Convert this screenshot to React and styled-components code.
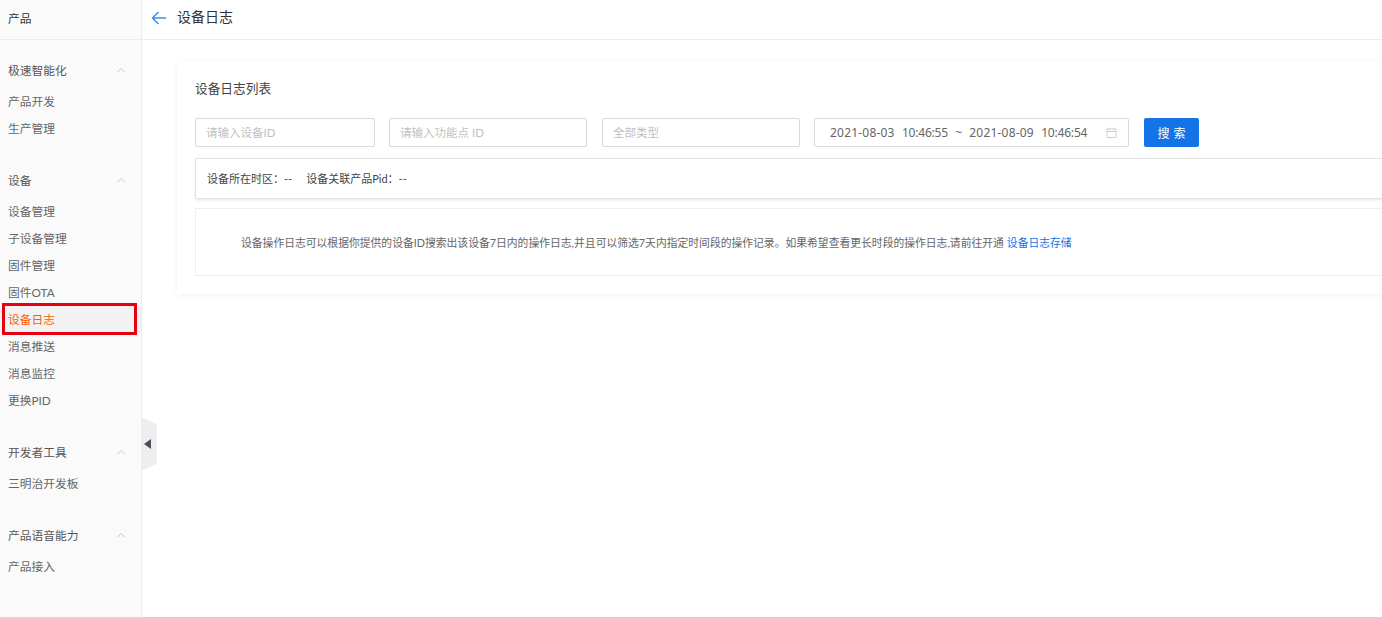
import React from 'react';
import styled, { createGlobalStyle } from 'styled-components';

const GlobalStyle = createGlobalStyle`
  html, body {
    margin: 0;
    padding: 0;
    height: 100%;
    background: #fff;
    overflow: hidden;
  }
  body {
    font-family: Lato, "Noto Sans CJK SC", sans-serif;
    font-size: 11.75px;
  }
  * { box-sizing: border-box; }
`;

const Page = styled.div`
  display: flex;
  width: 1382px;
  height: 617px;
  overflow: hidden;
`;

const Sidebar = styled.aside`
  position: relative;
  flex: 0 0 142px;
  background: #fafafa;
  border-right: 1px solid #ececec;
`;

const SideHead = styled.div`
  height: 40px;
  padding-left: 8px;
  line-height: 37px;
  color: #333;
  border-bottom: 1px solid #ececec;
`;

const Nav = styled.nav`
  display: flex;
  flex-direction: column;
  gap: 24px;
  padding-top: 16px;
`;

const Group = styled.div`
  display: flex;
  flex-direction: column;
`;

const GroupTitle = styled.div`
  display: flex;
  align-items: center;
  justify-content: space-between;
  height: 27px;
  padding: 0 15px 0 8px;
  margin-bottom: 5px;
  color: #555;
`;

const Item = styled.div`
  position: relative;
  height: 27px;
  line-height: 27px;
  padding-left: 8px;
  color: ${({ $active }) => ($active ? '#ff5c00' : '#666')};
  ${({ $active }) => $active && `
    background: #f2f2f2;
    &::after {
      content: '';
      box-sizing: border-box;
      position: absolute;
      left: 2px;
      top: -3px;
      width: 135px;
      height: 32px;
      border: 3px solid #e60012;
    }
  `}
`;

const Chevron = () => (
  <svg width="10" height="6" viewBox="0 0 10 6" fill="none" stroke="#c4c4c4" strokeWidth="1">
    <path d="M1.5 5L5 1.5 8.5 5" />
  </svg>
);

const Collapse = styled.div`
  position: absolute;
  left: 141px;
  top: 417px;
  width: 16px;
  height: 54px;
  padding-right: 3px;
  background: #eeeef0;
  clip-path: polygon(0 0, 100% 14%, 100% 86%, 0 100%);
  display: flex;
  align-items: center;
  justify-content: center;
  z-index: 2;
`;

const Main = styled.main`
  flex: 1;
  min-width: 0;
  overflow: hidden;
  display: flex;
  flex-direction: column;
`;

const TopBar = styled.header`
  display: flex;
  align-items: center;
  gap: 10px;
  height: 40px;
  padding: 0 0 3px 9px;
  border-bottom: 1px solid #ececec;
  color: #333;
`;

const PageTitle = styled.span`
  font-size: 14px;
  line-height: 18px;
  padding-bottom: 2px;
`;

const Content = styled.div`
  padding: 22px 0 0 35px;
`;

const Card = styled.section`
  width: 1300px;
  height: 232px;
  padding: 17px 0 0 18px;
  background: #fff;
  box-shadow: 0 1px 6px rgba(0, 0, 0, 0.06);
`;

const CardTitle = styled.h3`
  margin: 0 0 21px;
  font-size: 12.7px;
  line-height: 18px;
  font-weight: 400;
  color: #444;
`;

const Filters = styled.div`
  display: flex;
  height: 29px;
  margin-bottom: 11px;
`;

const Field = styled.div`
  flex: 0 0 ${({ $w }) => $w}px;
  margin-right: ${({ $gap }) => $gap}px;
  height: 29px;
  display: flex;
  align-items: center;
  padding: 0 0 2px 10px;
  border: 1px solid #d9d9d9;
  border-radius: 2px;
  color: #bfbfbf;
  font-size: 11.5px;
`;

const DateField = styled.div`
  flex: 0 0 315px;
  margin-right: 15px;
  height: 29px;
  display: flex;
  align-items: center;
  justify-content: space-between;
  padding: 0 11px 0 15px;
  border: 1px solid #d9d9d9;
  border-radius: 2px;
  color: #666;
`;

const DateRange = styled.span`
  display: inline-flex;
  gap: 7.25px;
  font-family: "Noto Sans", "Noto Sans CJK SC", sans-serif;
  font-size: 12px;
  white-space: pre;
`;

const DatePart = styled.span`
  letter-spacing: ${({ $time }) => ($time ? '-0.2px' : '0.2px')};
`;

const SearchButton = styled.button`
  width: 55px;
  height: 29px;
  margin: 0;
  padding: 0 0 0 4px;
  border: 0;
  border-radius: 2px;
  background: #1274e7;
  color: #fff;
  font: inherit;
  font-size: 12px;
  letter-spacing: 4px;
`;

const InfoBar = styled.div`
  display: flex;
  align-items: center;
  gap: 14px;
  height: 41px;
  padding: 0 0 1px 11px;
  border: 1px solid #e3e3e3;
  border-radius: 2px;
  box-shadow: 0 1px 3px rgba(0, 0, 0, 0.1);
  color: #444;
  font-size: 11px;
`;

const Notice = styled.div`
  display: flex;
  align-items: center;
  height: 68px;
  margin-top: 9px;
  padding: 0 0 0 45px;
  border: 1px solid #efefef;
  color: #666;
  font-size: 10.8px;
  white-space: nowrap;
`;

const Link = styled.a`
  margin-left: 3px;
  color: #1274e7;
`;

const groups = [
  { title: '极速智能化', items: ['产品开发', '生产管理'] },
  { title: '设备', items: ['设备管理', '子设备管理', '固件管理', '固件OTA', '设备日志', '消息推送', '消息监控', '更换PID'] },
  { title: '开发者工具', items: ['三明治开发板'] },
  { title: '产品语音能力', items: ['产品接入'] },
];

export default function App() {
  return (
    <>
      <GlobalStyle />
      <Page>
        <Sidebar>
          <SideHead>产品</SideHead>
          <Nav>
            {groups.map(group => (
              <Group key={group.title}>
                <GroupTitle>
                  {group.title}
                  <Chevron />
                </GroupTitle>
                {group.items.map(item => (
                  <Item key={item} $active={item === '设备日志'}>{item}</Item>
                ))}
              </Group>
            ))}
          </Nav>
          <Collapse>
            <svg width="7" height="10" viewBox="0 0 7 10">
              <path d="M7 0v10L0 5z" fill="#4a4f57" />
            </svg>
          </Collapse>
        </Sidebar>
        <Main>
          <TopBar>
            <svg width="16" height="14" viewBox="0 0 16 14" fill="none" stroke="#3f8fe8" strokeWidth="1.5">
              <path d="M15 7H1.5M7.5 1L1.5 7l6 6" />
            </svg>
            <PageTitle>设备日志</PageTitle>
          </TopBar>
          <Content>
            <Card>
              <CardTitle>设备日志列表</CardTitle>
              <Filters>
                <Field $w={180} $gap={14}>请输入设备ID</Field>
                <Field $w={198} $gap={15}>请输入功能点 ID</Field>
                <Field $w={198} $gap={14}>全部类型</Field>
                <DateField>
                  <DateRange>
                    <DatePart>2021-08-03</DatePart>
                    <DatePart $time>10:46:55</DatePart>
                    <span>~</span>
                    <DatePart>2021-08-09</DatePart>
                    <DatePart $time>10:46:54</DatePart>
                  </DateRange>
                  <svg width="11" height="11" viewBox="0 0 11 11" fill="none" stroke="#cfcfcf">
                    <path d="M1 2h9v8.5H1zM1 4.5h9M3 .5v2M8 .5v2" />
                  </svg>
                </DateField>
                <SearchButton>搜索</SearchButton>
              </Filters>
              <InfoBar>
                <span>设备所在时区：--</span>
                <span>设备关联产品Pid：--</span>
              </InfoBar>
              <Notice>
                设备操作日志可以根据你提供的设备ID搜索出该设备7日内的操作日志,并且可以筛选7天内指定时间段的操作记录。如果希望查看更长时段的操作日志,请前往开通
                <Link>设备日志存储</Link>
              </Notice>
            </Card>
          </Content>
        </Main>
      </Page>
    </>
  );
}
